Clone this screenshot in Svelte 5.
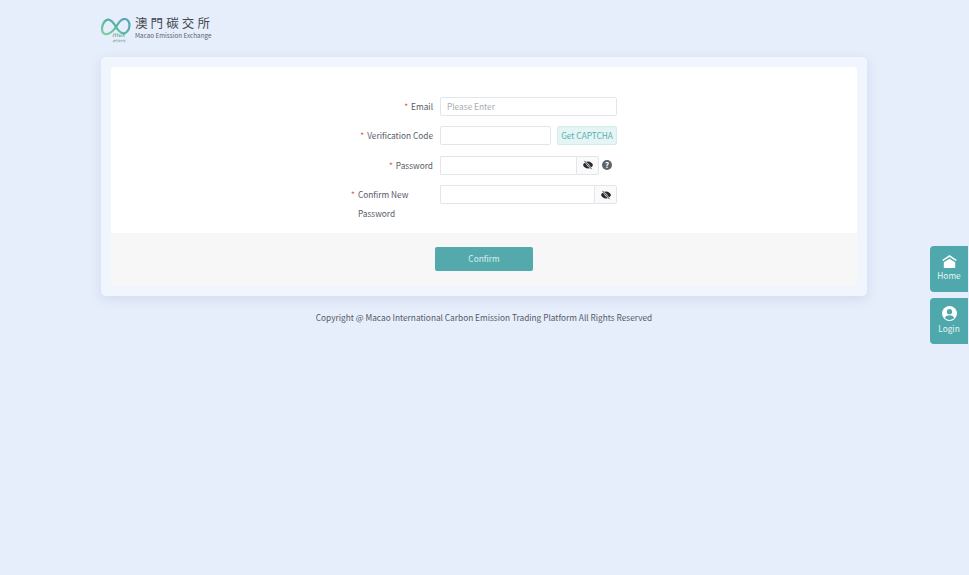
<script>
	const fields = [
		{ label: 'Email', placeholder: 'Please Enter', kind: 'text' },
		{ label: 'Verification Code', kind: 'captcha' },
		{ label: 'Password', kind: 'password', help: true },
		{ label: 'Confirm New Password', kind: 'password', wrap: true }
	];
</script>

<div class="page">
	<div class="wrap">
		<header class="logo">
			<svg class="logo__mark" viewBox="0 0 30 26" width="30" height="26" aria-hidden="true">
				<defs>
					<linearGradient id="ring" x1="0" y1="1" x2="1" y2="0">
						<stop offset="0" stop-color="#86cfa2" />
						<stop offset="0.5" stop-color="#56b5a0" />
						<stop offset="1" stop-color="#5a9fc4" />
					</linearGradient>
				</defs>
				<path
					d="M15 9C12.500 4.500 10 1.200 6.800 1.600 3.200 2.100.8 7.500 1 11.500 1.200 15 3.500 16.800 6.500 16 10 15 13 12 15 9 17 5.500 20 1 23.500 1 26.500 1 28.600 4 28.500 7.500 28.400 11.500 25.800 15.500 22.500 15.300 19.500 15.100 17 12.500 15 9Z"
					fill="none"
					stroke="url(#ring)"
					stroke-width="2.200"
				/>
				<text x="11" y="19.300" class="logo__mex">mex</text>
				<text x="11.500" y="24" class="logo__tiny">澳門碳交所</text>
			</svg>
			<div class="logo__text">
				<div class="logo__cn">澳門碳交所</div>
				<div class="logo__en">Macao Emission Exchange</div>
			</div>
		</header>

		<main class="card">
			<div class="card__body">
				<form class="form">
					{#each fields as field}
						<div class="row">
							<div class={`row__label${field.wrap ? ' row__label--wrap' : ''}`}>
								<span class="star">*</span>
								<span>{field.label}</span>
							</div>
							<div class="row__control">
								{#if field.kind === 'text'}
									<div class="input">{field.placeholder}</div>
								{:else if field.kind === 'captcha'}
									<div class="input"></div>
									<div class="captcha">Get CAPTCHA</div>
								{:else}
									<div class="group">
										<div class="input input--joined"></div>
										<div class="group__eye">
											<svg viewBox="0 0 16 16" width="10" height="10" aria-hidden="true">
												<path
													fill="#26282c"
													d="M8 2.500C4.400 2.500 1.500 4.800 0 8c1.500 3.200 4.400 5.500 8 5.500s6.500-2.300 8-5.500C14.500 4.800 11.600 2.500 8 2.500Z"
												/>
												<circle cx="8" cy="8" r="2.300" fill="#8a8c90" />
												<path d="M2.400 1.400 13.600 14.600" stroke="#fafafa" stroke-width="2.600" />
												<path d="M2.400 1.400 13.600 14.600" stroke="#26282c" stroke-width="1.400" />
											</svg>
										</div>
									</div>
									{#if field.help}
										<svg class="help" viewBox="0 0 14 14" width="10" height="10" aria-hidden="true">
											<circle cx="7" cy="7" r="7" fill="#606266" />
											<text x="7" y="11" class="help__mark">?</text>
										</svg>
									{/if}
								{/if}
							</div>
						</div>
					{/each}
				</form>
			</div>
			<div class="card__foot">
				<button type="button" class="confirm">Confirm</button>
			</div>
		</main>

		<footer class="copyright">Copyright @ Macao International Carbon Emission Trading Platform All Rights Reserved</footer>
	</div>

	<aside class="side">
		<div class="side__item">
			<svg viewBox="0 0 18 16" width="15" height="13" aria-hidden="true">
				<path d="M9 0 18 6 16.800 7.500 9 2.400 1.200 7.500 0 6Z" fill="#fff" />
				<path d="M9 4.500 16 9V16H2V9Z" fill="#fff" />
			</svg>
			<span>Home</span>
		</div>
		<div class="side__item">
			<svg viewBox="0 0 16 16" width="15" height="15" aria-hidden="true">
				<circle cx="8" cy="8" r="8" fill="#fff" />
				<circle cx="8" cy="6" r="2.800" fill="#4fa8ab" />
				<path d="M2.900 12.600C4 10.600 6 9.800 8 9.800s4 .8 5.100 2.800C11.800 14 10 14.800 8 14.800s-3.800-.8-5.100-2.200Z" fill="#4fa8ab" />
			</svg>
			<span>Login</span>
		</div>
	</aside>
</div>

<style>
	:global(body) {
		margin: 0;
		background: #e6eefb;
		font-family: 'Noto Sans CJK SC', 'Noto Sans', sans-serif;
	}

	.page {
		position: relative;
		height: 575px;
		overflow: hidden;
		color: #555b66;
		font-size: 8.300px;
	}

	.wrap {
		width: 766px;
		margin-left: 101px;
	}

	.logo {
		display: flex;
		align-items: center;
		gap: 4px;
		height: 57px;
		box-sizing: border-box;
		padding-bottom: 1px;
	}

	.logo__mark {
		display: block;
		margin-top: 5px;
	}

	.logo__text {
		margin-top: -1px;
	}

	.logo__mex {
		font-size: 6.500px;
		font-style: italic;
		fill: #5aa28e;
	}

	.logo__tiny {
		font-size: 2.600px;
		fill: #6f9f92;
	}

	.logo__cn {
		font-size: 12.500px;
		line-height: 16px;
		letter-spacing: 3.100px;
		color: #44484f;
	}

	.logo__en {
		font-size: 6.300px;
		line-height: 9px;
		color: #5e636c;
	}

	.card {
		background: #f1f6fe;
		border-radius: 5px;
		padding: 10px;
		box-shadow: 0 3px 12px rgba(120, 145, 190, 0.2);
	}

	.card__body {
		background: #fff;
		height: 166px;
		box-sizing: border-box;
		padding-top: 30px;
		border-radius: 3px 3px 0 0;
	}

	.form {
		margin-left: 240px;
		width: 266px;
	}

	.row {
		display: flex;
		gap: 7px;
		height: 29.400px;
	}

	.row__label {
		width: 82px;
		display: flex;
		justify-content: flex-end;
		gap: 3px;
		line-height: 18.700px;
		white-space: nowrap;
		color: #555b66;
	}

	.row__label--wrap {
		justify-content: flex-start;
		white-space: normal;
		padding-right: 20px;
		box-sizing: border-box;
		line-height: 19.300px;
	}

	.star {
		color: #e0604c;
	}

	.row__control {
		flex: 1;
		display: flex;
		align-items: flex-start;
		gap: 6px;
		position: relative;
	}

	.input {
		flex: 1;
		height: 19px;
		box-sizing: border-box;
		background: #fff;
		border: 1px solid #e2e5ea;
		border-radius: 2px;
		padding: 0 6px;
		line-height: 17px;
		color: #a8abb2;
	}

	.input--joined {
		border-right: none;
		border-radius: 2px 0 0 2px;
	}

	.captcha {
		width: 60px;
		height: 19px;
		box-sizing: border-box;
		background: #e5f4f4;
		border: 1px solid #d3ecec;
		border-radius: 2px;
		color: #5aafb0;
		line-height: 17px;
		text-align: center;
		white-space: nowrap;
	}

	.group {
		flex: 1;
		display: flex;
	}

	.group__eye {
		width: 23px;
		height: 19px;
		box-sizing: border-box;
		background: #fafafa;
		border: 1px solid #e2e5ea;
		border-radius: 0 2px 2px 0;
		display: flex;
		align-items: center;
		justify-content: center;
	}

	.help {
		margin-top: 4px;
		position: absolute;
		left: 162px;
	}

	.help__mark {
		font-size: 11px;
		font-weight: 700;
		fill: #fff;
		text-anchor: middle;
	}

	.row:nth-child(3) .group {
		flex: none;
		width: 159px;
	}

	.card__foot {
		background: #f7f7f7;
		height: 53px;
		display: flex;
		justify-content: center;
		padding-top: 14px;
		box-sizing: border-box;
	}

	.confirm {
		width: 98px;
		height: 24px;
		border: none;
		border-radius: 2px;
		background: #53a9ac;
		color: #d9f0f0;
		font: inherit;
		line-height: 23px;
		padding: 0 0 1px;
	}

	.copyright {
		text-align: center;
		margin-top: 12.500px;
		line-height: 16px;
		color: #555b66;
	}

	.side {
		position: absolute;
		right: 1px;
		top: 246px;
		display: flex;
		flex-direction: column;
		gap: 6px;
	}

	.side__item {
		width: 38px;
		height: 46px;
		box-sizing: border-box;
		padding-bottom: 1px;
		background: #4fa8ab;
		border-radius: 4px 0 0 4px;
		color: #e8f6f6;
		display: flex;
		flex-direction: column;
		align-items: center;
		justify-content: center;
		gap: 1px;
		line-height: 13px;
	}
</style>
